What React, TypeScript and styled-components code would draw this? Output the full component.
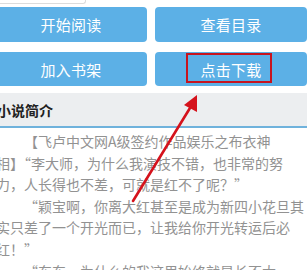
import React from "react";
import styled, { createGlobalStyle } from "styled-components";

const Global = createGlobalStyle`
  html, body { margin: 0; padding: 0; background: #fff; overflow: hidden; }
  body { font-family: "Noto Sans CJK SC", "Noto Sans", sans-serif; }
`;

const Page = styled.div`
  position: relative;
  width: 307px;
  height: 270px;
  overflow: hidden;
`;

const TopBox = styled.div`
  width: 88px;
  height: 3px;
  margin-left: -4px;
  border: 1px solid #dcdcdc;
  border-top: none;
  border-radius: 0 0 3px 3px;
`;

const ButtonGrid = styled.div`
  display: grid;
  grid-template-columns: 152px 152px;
  column-gap: 8px;
  row-gap: 10px;
  margin: 3px 0 0 -5px;
`;

const Button = styled.div<{ $h: number }>`
  position: relative;
  height: ${(p) => p.$h}px;
  background: #5cb0e6;
  border-radius: 4px;
  color: #fff;
  font-size: 15px;
  display: flex;
  align-items: center;
  justify-content: center;
  letter-spacing: 0.3px;
`;

const Highlight = styled.div`
  position: absolute;
  left: 31px;
  top: 1px;
  width: 82px;
  height: 26px;
  border: 2.5px solid #c8141e;
`;

const SectionHeader = styled.div`
  margin-top: 7px;
  height: 33px;
  background: #eceef0;
  border-bottom: 2px solid #6fb2dc;
  display: flex;
  align-items: center;
  margin-left: -3px;
  font-size: 14px;
  font-weight: bold;
  color: #222;
`;

const Intro = styled.div`
  margin: 3px 0 0 -4px;
  width: 311px;
  font-size: 14px;
  line-height: 21.6px;
  color: #929292;
`;

const Para = styled.p`
  margin: 0;
  text-indent: 2em;
`;

const Arrow = styled.svg`
  position: absolute;
  left: 0;
  top: 0;
  pointer-events: none;
`;

export default function App() {
  return (
    <>
      <Global />
      <Page>
        <TopBox />
        <ButtonGrid>
          <Button $h={35}>开始阅读</Button>
          <Button $h={35}>查看目录</Button>
          <Button $h={34}>加入书架</Button>
          <Button $h={34}>
            点击下载
            <Highlight />
          </Button>
        </ButtonGrid>
        <SectionHeader>小说简介</SectionHeader>
        <Intro>
          <Para>
            【飞卢中文网A级签约作品娱乐之布衣神相】“李大师，为什么我演技不错，也非常的努力，人长得也不差，可就是红不了呢？”
          </Para>
          <Para>
            “颖宝啊，你离大红甚至是成为新四小花旦其实只差了一个开光而已，让我给你开光转运后必红！”
          </Para>
          <Para>“东东，为什么的我这里始终就是长不大呢？”</Para>
        </Intro>
        <Arrow width="307" height="270" viewBox="0 0 307 270">
          <line x1="133" y1="201" x2="190" y2="108" stroke="#d5121c" strokeWidth="2.6" strokeLinecap="round" />
          <polygon points="197,95 184,105 197,112" fill="#d5121c" />
        </Arrow>
      </Page>
    </>
  );
}
